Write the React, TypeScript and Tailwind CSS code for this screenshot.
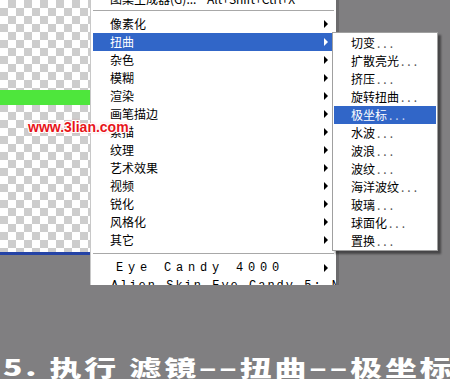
const mainItems = [
  "像素化",
  "扭曲",
  "杂色",
  "模糊",
  "渲染",
  "画笔描边",
  "素描",
  "纹理",
  "艺术效果",
  "视频",
  "锐化",
  "风格化",
  "其它",
];

const subItems = [
  "切变",
  "扩散亮光",
  "挤压",
  "旋转扭曲",
  "极坐标",
  "水波",
  "波浪",
  "波纹",
  "海洋波纹",
  "玻璃",
  "球面化",
  "置换",
];

const Arrow = ({ white }: { white?: boolean }) => (
  <span
    className={
      "h-0 w-0 shrink-0 border-y-[4px] border-l-[4px] border-y-transparent " +
      (white ? "border-l-white" : "border-l-black")
    }
  />
);

export default function App() {
  return (
    <div className="relative flex h-[379px] w-[450px] flex-col overflow-hidden bg-[#807f81] font-['Noto_Sans_CJK_SC',sans-serif] text-[12px] text-black">
      <div className="flex h-[285px] shrink-0">
        <div className="flex w-[90px] flex-col">
          <div className="h-[252px] shrink-0 bg-[repeating-conic-gradient(#cdcdcd_0_25%,#ffffff_0_50%)] bg-[length:16px_16px] pt-[90px]">
            <div className="h-[15px] bg-[#4ee63c]" />
          </div>
          <div className="h-[3px] shrink-0 bg-[#2443a6]" />
        </div>

        <div className="flex h-[285px] w-[246px] flex-col overflow-hidden border-l border-[#c8c8c8] bg-white">
          <div className="mt-[-10px] flex h-[18px] shrink-0 items-center px-[19px] leading-[18px]">
            <span className="w-[97px]">图案生成器(G)...</span>
            <span>Alt+Shift+Ctrl+X</span>
          </div>
          <div className="mx-[2px] mt-[2px] shrink-0 border-t border-b border-t-[#a8a8a8] border-b-white" />
          <div className="mt-[3px] flex shrink-0 flex-col">
            {mainItems.map((item) => {
              const active = item === "扭曲";
              return (
                <div
                  key={item}
                  className={
                    "mx-[2px] flex h-[18px] shrink-0 items-center justify-between pr-[6px] pl-[17px] leading-[18px] " +
                    (active ? "bg-[#3166c8] text-white" : "")
                  }
                >
                  <span>{item}</span>
                  <Arrow white={active} />
                </div>
              );
            })}
          </div>
          <div className="mx-[2px] mt-[4px] shrink-0 border-t border-b border-t-[#a8a8a8] border-b-white" />
          <div className="mt-[4px] flex shrink-0 flex-col font-['Liberation_Mono',monospace]">
            <div className="mx-[2px] flex h-[18px] shrink-0 items-center justify-between pr-[6px] pl-[23px]">
              <span className="tracking-[4.8px]">Eye Candy 4000</span>
              <Arrow />
            </div>
            <div className="mx-[2px] flex h-[18px] shrink-0 items-center justify-between pr-[6px] pl-[18px]">
              <span className="whitespace-nowrap tracking-[2px]">Alien Skin Eye Candy 5: Nature</span>
              <Arrow />
            </div>
          </div>
        </div>
        <div className="h-[285px] w-[3px] bg-[#6c6b6d]" />
      </div>

      <div className="mt-[70px] origin-left scale-x-[1.45] pl-[2px] text-[22px] leading-[22px] font-black tracking-[2px] whitespace-nowrap text-white">
        5. 执行 滤镜––扭曲––极坐标
      </div>

      <div className="absolute top-[32px] left-[332px] flex h-[219px] w-[106px] flex-col border border-[#a0a0a0] bg-white pt-[1px] shadow-[3px_3px_2px_rgba(0,0,0,0.45)]">
        {subItems.map((item) => {
          const active = item === "极坐标";
          return (
            <div
              key={item}
              className={
                "mx-[1px] flex h-[18px] shrink-0 items-center pl-[17px] leading-[18px] " +
                (active ? "bg-[#3166c8] text-white" : "")
              }
            >
              <span>{item}</span>
              <span
                className={
                  "ml-[2px] tracking-[3px] " +
                  (active ? "text-[#c8d4ee]" : "text-[#555555]")
                }
              >
                ...
              </span>
            </div>
          );
        })}
      </div>

      <div className="absolute top-[120px] left-[28px] font-['Liberation_Sans',sans-serif] text-[14px] leading-[14px] font-bold text-[#e8141a] [text-shadow:1px_0_0_#fff,-1px_0_0_#fff,0_1px_0_#fff,0_-1px_0_#fff,1px_1px_0_#fff,-1px_-1px_0_#fff,1px_-1px_0_#fff,-1px_1px_0_#fff,0_0_3px_#f55]">
        www.3lian.com
      </div>
    </div>
  );
}
